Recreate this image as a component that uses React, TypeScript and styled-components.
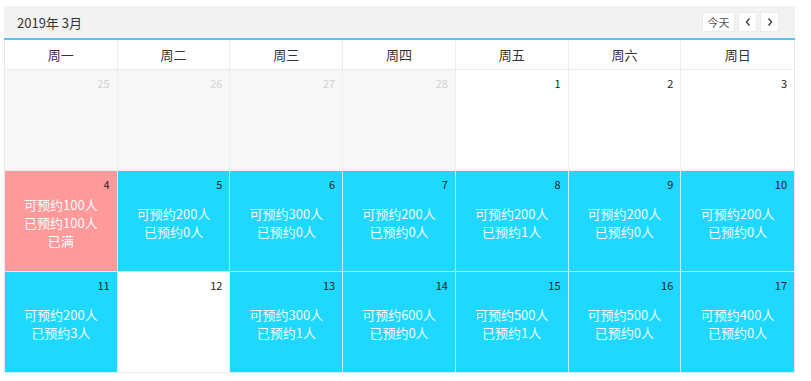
import React from 'react';
import styled, { createGlobalStyle } from 'styled-components';

const GlobalStyle = createGlobalStyle`
  html, body {
    margin: 0;
    padding: 0;
    background: #fff;
    font-family: "Noto Sans CJK SC", "Noto Sans", sans-serif;
  }
`;

const Page = styled.div`
  padding: 6px 16px 0 4px;
`;

const Calendar = styled.div`
  width: 791px;
`;

const Toolbar = styled.div`
  height: 32px;
  background: #f2f2f2;
  display: flex;
  align-items: center;
  justify-content: space-between;
  padding: 0 16px 0 13px;
  border-bottom: 2px solid #55c6ef;
`;

const Title = styled.div`
  font-size: 13px;
  color: #333;
`;

const Buttons = styled.div`
  display: flex;
  gap: 3px;
`;

const NavButton = styled.button<{ wide?: boolean }>`
  height: 20px;
  min-width: ${({ wide }) => (wide ? '33px' : '19px')};
  padding: 0;
  background: #fff;
  border: 1px solid #ebebeb;
  font-family: inherit;
  font-size: 11px;
  color: #555;
  display: flex;
  align-items: center;
  justify-content: center;
`;

const Grid = styled.div`
  display: grid;
  grid-template-columns: repeat(7, 1fr);
  border-left: 1px solid #e8e8e8;
  border-right: 1px solid #e8e8e8;
`;

const WeekHead = styled.div`
  height: 29px;
  display: flex;
  align-items: center;
  justify-content: center;
  font-size: 13px;
  color: #333;
  border-right: 1px solid #ececec;
  border-bottom: 1px solid #ececec;
  &:nth-child(7n) {
    border-right: none;
  }
`;

type Kind = 'other' | 'plain' | 'open' | 'full';

const cellBg: Record<Kind, string> = {
  other: '#f7f7f7',
  plain: '#fff',
  open: '#1fd8ff',
  full: '#ff9a9a',
};

const Cell = styled.div<{ kind: Kind }>`
  height: 100px;
  position: relative;
  background: ${({ kind }) => cellBg[kind]};
  border-right: 1px solid ${({ kind }) => (kind === 'other' || kind === 'plain' ? '#eeeeee' : '#c9f1fb')};
  border-bottom: 1px solid ${({ kind }) => (kind === 'other' || kind === 'plain' ? '#eeeeee' : '#c9f1fb')};
  display: flex;
  flex-direction: column;
  align-items: center;
  justify-content: center;
  &:nth-child(7n) {
    border-right: none;
  }
`;

const DayNum = styled.span<{ muted?: boolean }>`
  position: absolute;
  top: 5px;
  right: 7px;
  font-size: 11px;
  color: ${({ muted }) => (muted ? '#d2d2d2' : '#222')};
`;

const Info = styled.div`
  font-size: 13px;
  line-height: 18px;
  color: #f2fbff;
  text-align: center;
  padding-top: 4px;
`;

interface Day {
  n: number;
  kind: Kind;
  lines?: string[];
}

const weekdays = ['周一', '周二', '周三', '周四', '周五', '周六', '周日'];

const days: Day[] = [
  { n: 25, kind: 'other' },
  { n: 26, kind: 'other' },
  { n: 27, kind: 'other' },
  { n: 28, kind: 'other' },
  { n: 1, kind: 'plain' },
  { n: 2, kind: 'plain' },
  { n: 3, kind: 'plain' },
  { n: 4, kind: 'full', lines: ['可预约100人', '已预约100人', '已满'] },
  { n: 5, kind: 'open', lines: ['可预约200人', '已预约0人'] },
  { n: 6, kind: 'open', lines: ['可预约300人', '已预约0人'] },
  { n: 7, kind: 'open', lines: ['可预约200人', '已预约0人'] },
  { n: 8, kind: 'open', lines: ['可预约200人', '已预约1人'] },
  { n: 9, kind: 'open', lines: ['可预约200人', '已预约0人'] },
  { n: 10, kind: 'open', lines: ['可预约200人', '已预约0人'] },
  { n: 11, kind: 'open', lines: ['可预约200人', '已预约3人'] },
  { n: 12, kind: 'plain' },
  { n: 13, kind: 'open', lines: ['可预约300人', '已预约1人'] },
  { n: 14, kind: 'open', lines: ['可预约600人', '已预约0人'] },
  { n: 15, kind: 'open', lines: ['可预约500人', '已预约1人'] },
  { n: 16, kind: 'open', lines: ['可预约500人', '已预约0人'] },
  { n: 17, kind: 'open', lines: ['可预约400人', '已预约0人'] },
];

const Chevron: React.FC<{ dir: 'left' | 'right' }> = ({ dir }) => (
  <svg width="8" height="10" viewBox="0 0 8 10">
    <path
      d={dir === 'left' ? 'M5.5 1.5 L2.5 5 L5.5 8.5' : 'M2.5 1.5 L5.5 5 L2.5 8.5'}
      fill="none"
      stroke="#444"
      strokeWidth="1.4"
    />
  </svg>
);

const App: React.FC = () => (
  <Page>
    <GlobalStyle />
    <Calendar>
      <Toolbar>
        <Title>2019年 3月</Title>
        <Buttons>
          <NavButton wide>今天</NavButton>
          <NavButton>
            <Chevron dir="left" />
          </NavButton>
          <NavButton>
            <Chevron dir="right" />
          </NavButton>
        </Buttons>
      </Toolbar>
      <Grid>
        {weekdays.map((w) => (
          <WeekHead key={w}>{w}</WeekHead>
        ))}
        {days.map((d) => (
          <Cell key={`${d.kind}-${d.n}`} kind={d.kind}>
            <DayNum muted={d.kind === 'other'}>{d.n}</DayNum>
            {d.lines && (
              <Info>
                {d.lines.map((l) => (
                  <div key={l}>{l}</div>
                ))}
              </Info>
            )}
          </Cell>
        ))}
      </Grid>
    </Calendar>
  </Page>
);

export default App;
